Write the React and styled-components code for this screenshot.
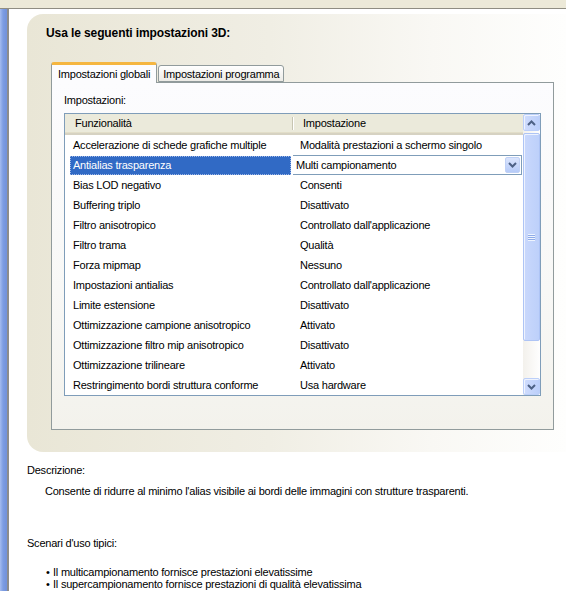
import React from 'react';
import styled, { createGlobalStyle } from 'styled-components';

const GlobalStyle = createGlobalStyle`
  html, body { margin: 0; padding: 0; background: #fff; }
  body {
    font-family: "Liberation Sans", Arial, sans-serif;
    font-size: 11px;
    letter-spacing: -0.22px;
    color: #000;
    overflow: hidden;
  }
  * { box-sizing: border-box; }
`;

const Window = styled.div`
  width: 566px;
  height: 591px;
  display: flex;
  flex-direction: column;
  overflow: hidden;
  background: #fff;
`;

const TopBar = styled.div`
  flex: none;
  height: 9px;
  background: #ece9d8;
  border-bottom: 1px solid #8f8d82;
`;

const Body = styled.div`
  flex: 1;
  display: flex;
  min-height: 0;
`;

const SideStrip = styled.div`
  flex: none;
  width: 9px;
  background: linear-gradient(to right, #a4bcf0 0px, #7d9de2 3px, #7393dc 6px);
  border-right: 2px solid #8c8c8c;
`;

const Content = styled.div`
  flex: 1;
  padding: 5px 0 0 18px;
  display: flex;
  flex-direction: column;
  min-width: 0;
`;

const OuterPanel = styled.div`
  flex: none;
  height: 438px;
  border-radius: 16px 0 0 16px;
  background: linear-gradient(to right, #e9e6d6 0%, #f0eee4 45%, #f9f8f4 75%, #fefefd 100%);
  padding: 13px 0 0 19px;
  display: flex;
  flex-direction: column;
`;

const Title = styled.div`
  font-weight: bold;
  font-size: 12px;
  letter-spacing: -0.1px;
  line-height: 13px;
  height: 13px;
`;

const TabArea = styled.div`
  margin: 22px 0 0 5px;
  display: flex;
  flex-direction: column;
`;

const TabStrip = styled.div`
  display: flex;
  align-items: flex-end;
  height: 20px;
  position: relative;
  z-index: 1;
`;

const Tab = styled.div`
  height: ${p => (p.$active ? '21px' : '17px')};
  margin-bottom: ${p => (p.$active ? '-1px' : '0')};
  padding: ${p => (p.$active ? '2px 6px 0 6px' : '1px 4px 0 4px')};
  line-height: 14px;
  border: 1px solid #919b9c;
  border-bottom: ${p => (p.$active ? 'none' : '1px solid #919b9c')};
  border-top: ${p => (p.$active ? '3px solid #f5b640' : '1px solid #919b9c')};
  border-radius: 3px 3px 0 0;
  background: ${p => (p.$active ? '#fcfcfe' : 'linear-gradient(to bottom, #ffffff, #ecebe6)')};
  white-space: nowrap;
  margin-left: ${p => (p.$active ? '0' : '1px')};
`;

const TabPage = styled.div`
  width: 503px;
  height: 348px;
  border: 1px solid #919b9c;
  background: linear-gradient(to bottom, #fcfcfe 0%, #f8f8f6 60%, #f3f2ec 100%);
  padding: 11px 0 0 12px;
  display: flex;
  flex-direction: column;
`;

const Label = styled.div`
  line-height: 13px;
  height: 13px;
`;

const ListView = styled.div`
  margin-top: 6px;
  width: 477px;
  height: 283px;
  border: 1px solid #7f9db9;
  background: #fff;
  display: flex;
`;

const ListMain = styled.div`
  flex: 1;
  display: flex;
  flex-direction: column;
  min-width: 0;
`;

const HeaderRow = styled.div`
  height: 21px;
  display: grid;
  grid-template-columns: 228px 1fr;
  background: #ebeadb;
  border-bottom: 2px solid #d6d2c2;
  box-shadow: inset 0 -1px 0 #e2dec9;
`;

const HeaderCell = styled.div`
  padding-left: 10px;
  line-height: 19px;
  position: relative;
  ${p => p.$sep && `
    &::after {
      content: "";
      position: absolute;
      right: 0;
      top: 3px;
      bottom: 3px;
      width: 1px;
      background: #c7c5b2;
      box-shadow: 1px 0 0 #fff;
    }
  `}
`;

const Row = styled.div`
  height: 20px;
  display: grid;
  grid-template-columns: 228px 1fr;
  align-items: center;
`;

const Cell = styled.div`
  padding-left: ${p => p.$pad}px;
  line-height: 20px;
  white-space: nowrap;
  overflow: hidden;
`;

const Highlight = styled.div`
  margin-left: 5px;
  width: 221px;
  height: 19px;
  line-height: 17px;
  padding-left: 2px;
  background: #316ac5;
  color: #fff;
  border: 1px dotted #9fb7e6;
`;

const Combo = styled.div`
  margin-left: -1px;
  width: 230px;
  height: 20px;
  border: 1px solid #7f9db9;
  background: #fff;
  display: flex;
  align-items: center;
  padding-left: 3px;
`;

const ComboText = styled.span`
  flex: 1;
  line-height: 18px;
`;

const ComboButton = styled.div`
  width: 15px;
  height: 16px;
  margin-right: 1px;
  border-radius: 2px;
  background: linear-gradient(to bottom, #dbe5fd, #b6cbf8);
  border: 1px solid #c0d1f6;
  display: flex;
  align-items: center;
  justify-content: center;
`;

const ScrollBar = styled.div`
  flex: none;
  width: 17px;
  display: flex;
  flex-direction: column;
  background: linear-gradient(to right, #f3f1ec, #fefefe);
`;

const ScrollButton = styled.div`
  flex: none;
  height: 17px;
  border-radius: 2px;
  border: 1px solid #bccff9;
  background: linear-gradient(to right, #cfdcfd, #bccffa);
  box-shadow: inset 1px 1px 0 #eef3fe;
  display: flex;
  align-items: center;
  justify-content: center;
`;

const Thumb = styled.div`
  flex: none;
  margin-top: 2px;
  height: 208px;
  border-radius: 2px;
  border: 1px solid #aec4f5;
  background: linear-gradient(to right, #c9d8fc, #bdd0fa);
  box-shadow: inset 1px 1px 0 #eef3fe;
  display: flex;
  align-items: center;
  justify-content: center;
`;

const Grip = styled.div`
  width: 7px;
  height: 7px;
  background: repeating-linear-gradient(to bottom, #eef4fe 0px, #eef4fe 1px, #8fabe8 1px, #8fabe8 2px);
`;

const Track = styled.div`
  flex: 1;
`;

const Section = styled.div`
  margin-top: ${p => p.$mt}px;
  padding-left: ${p => p.$indent || 0}px;
  line-height: ${p => p.$lh || 13}px;
`;

const Bullet = styled.div`
  display: flex;
  line-height: 12px;
  padding-left: 19px;
`;

const Dot = styled.span`
  width: 7px;
  flex: none;
`;

const Chevron = ({ up }) => (
  <svg width="9" height="6" viewBox="0 0 9 6">
    <path
      d={up ? 'M1 5 L4.5 1.5 L8 5' : 'M1 1 L4.5 4.5 L8 1'}
      fill="none"
      stroke="#4d6185"
      strokeWidth="2"
    />
  </svg>
);

const rows = [
  ['Accelerazione di schede grafiche multiple', 'Modalità prestazioni a schermo singolo'],
  ['Antialias trasparenza', 'Multi campionamento', true],
  ['Bias LOD negativo', 'Consenti'],
  ['Buffering triplo', 'Disattivato'],
  ['Filtro anisotropico', "Controllato dall'applicazione"],
  ['Filtro trama', 'Qualità'],
  ['Forza mipmap', 'Nessuno'],
  ['Impostazioni antialias', "Controllato dall'applicazione"],
  ['Limite estensione', 'Disattivato'],
  ['Ottimizzazione campione anisotropico', 'Attivato'],
  ['Ottimizzazione filtro mip anisotropico', 'Disattivato'],
  ['Ottimizzazione trilineare', 'Attivato'],
  ['Restringimento bordi struttura conforme', 'Usa hardware'],
];

export default function App() {
  return (
    <>
      <GlobalStyle />
      <Window>
        <TopBar />
        <Body>
          <SideStrip />
          <Content>
            <OuterPanel>
              <Title>Usa le seguenti impostazioni 3D:</Title>
              <TabArea>
                <TabStrip>
                  <Tab $active>Impostazioni globali</Tab>
                  <Tab>Impostazioni programma</Tab>
                </TabStrip>
                <TabPage>
                  <Label>Impostazioni:</Label>
                  <ListView>
                    <ListMain>
                      <HeaderRow>
                        <HeaderCell $sep>Funzionalità</HeaderCell>
                        <HeaderCell>Impostazione</HeaderCell>
                      </HeaderRow>
                      {rows.map(([name, value, selected]) =>
                        selected ? (
                          <Row key={name}>
                            <Cell $pad={0}>
                              <Highlight>{name}</Highlight>
                            </Cell>
                            <Cell $pad={0}>
                              <Combo>
                                <ComboText>{value}</ComboText>
                                <ComboButton>
                                  <Chevron />
                                </ComboButton>
                              </Combo>
                            </Cell>
                          </Row>
                        ) : (
                          <Row key={name}>
                            <Cell $pad={8}>{name}</Cell>
                            <Cell $pad={7}>{value}</Cell>
                          </Row>
                        )
                      )}
                    </ListMain>
                    <ScrollBar>
                      <ScrollButton>
                        <Chevron up />
                      </ScrollButton>
                      <Thumb>
                        <Grip />
                      </Thumb>
                      <Track />
                      <ScrollButton>
                        <Chevron />
                      </ScrollButton>
                    </ScrollBar>
                  </ListView>
                </TabPage>
              </TabArea>
            </OuterPanel>
            <Section $mt={12}>Descrizione:</Section>
            <Section $mt={8} $indent={18}>
              Consente di ridurre al minimo l'alias visibile ai bordi delle immagini con strutture trasparenti.
            </Section>
            <Section $mt={39}>Scenari d'uso tipici:</Section>
            <Section $mt={16}>
              <Bullet>
                <Dot>•</Dot>Il multicampionamento fornisce prestazioni elevatissime
              </Bullet>
              <Bullet>
                <Dot>•</Dot>Il supercampionamento fornisce prestazioni di qualità elevatissima
              </Bullet>
            </Section>
          </Content>
        </Body>
      </Window>
    </>
  );
}
